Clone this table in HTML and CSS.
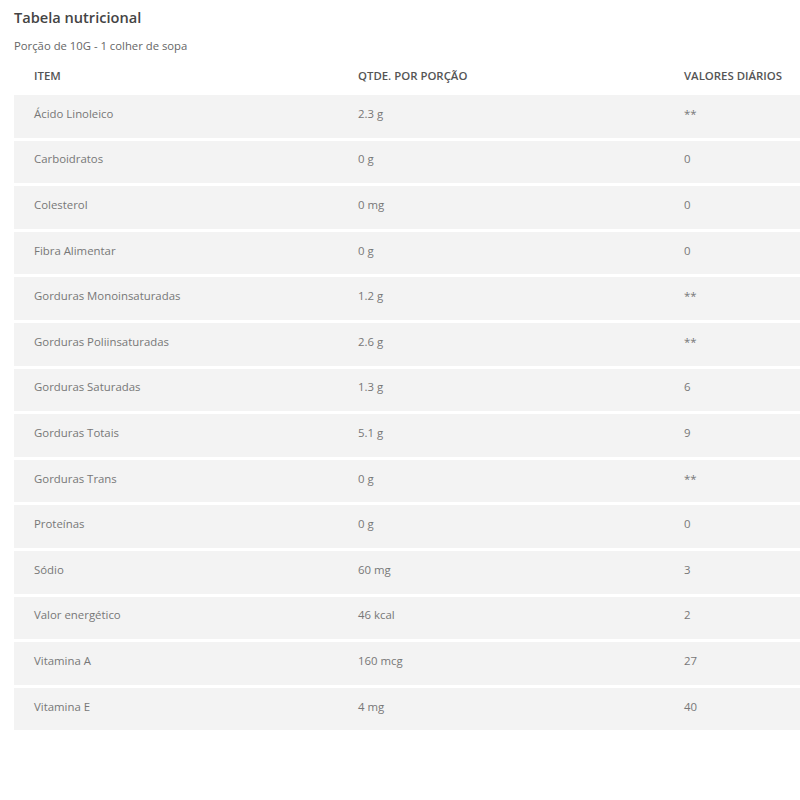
FILE: index.html
```html
<!DOCTYPE html>
<html lang="pt">
<head>
<meta charset="utf-8">
<title>Tabela nutricional</title>
<link rel="stylesheet" href="styles.css">
</head>
<body>
<section class="nutri">
  <h2 class="nutri-title">Tabela nutricional</h2>
  <p class="nutri-portion">Porção de 10G - 1 colher de sopa</p>
  <div class="nutri-table">
    <div class="nutri-head">
      <span>ITEM</span><span>QTDE. POR PORÇÃO</span><span>VALORES DIÁRIOS</span>
    </div>
    <div class="nutri-row"><span>Ácido Linoleico</span><span>2.3 g</span><span>**</span></div>
    <div class="nutri-row"><span>Carboidratos</span><span>0 g</span><span>0</span></div>
    <div class="nutri-row"><span>Colesterol</span><span>0 mg</span><span>0</span></div>
    <div class="nutri-row"><span>Fibra Alimentar</span><span>0 g</span><span>0</span></div>
    <div class="nutri-row"><span>Gorduras Monoinsaturadas</span><span>1.2 g</span><span>**</span></div>
    <div class="nutri-row"><span>Gorduras Poliinsaturadas</span><span>2.6 g</span><span>**</span></div>
    <div class="nutri-row"><span>Gorduras Saturadas</span><span>1.3 g</span><span>6</span></div>
    <div class="nutri-row"><span>Gorduras Totais</span><span>5.1 g</span><span>9</span></div>
    <div class="nutri-row"><span>Gorduras Trans</span><span>0 g</span><span>**</span></div>
    <div class="nutri-row"><span>Proteínas</span><span>0 g</span><span>0</span></div>
    <div class="nutri-row"><span>Sódio</span><span>60 mg</span><span>3</span></div>
    <div class="nutri-row"><span>Valor energético</span><span>46 kcal</span><span>2</span></div>
    <div class="nutri-row"><span>Vitamina A</span><span>160 mcg</span><span>27</span></div>
    <div class="nutri-row"><span>Vitamina E</span><span>4 mg</span><span>40</span></div>
  </div>
</section>
</body>
</html>
```
FILE: styles.css
```css
html, body {
  margin: 0;
  padding: 0;
  background: #ffffff;
}
body {
  font-family: "Open Sans", "Noto Sans", sans-serif;
  color: #777;
}
.nutri {
  padding: 7px 0 0 14px;
}
.nutri-title {
  margin: 0;
  font-size: 14.6px;
  line-height: 20px;
  font-weight: 600;
  color: #444;
}
.nutri-portion {
  margin: 9px 0 0;
  font-size: 11.3px;
  line-height: 20px;
  color: #666;
}
.nutri-table {
  display: flex;
  flex-direction: column;
  gap: 3px;
}
.nutri-head,
.nutri-row {
  display: grid;
  grid-template-columns: 324px 326px 1fr;
  padding-left: 20px;
  align-items: center;
}
.nutri-head {
  padding: 10px 0 6px 20px;
  line-height: 20px;
  font-size: 11.4px;
  font-weight: 600;
  color: #555;
}
.nutri-row {
  box-sizing: border-box;
  height: 42.6px;
  padding-bottom: 6px;
  background: #f3f3f3;
  font-size: 11.4px;
  color: #777;
}
```
